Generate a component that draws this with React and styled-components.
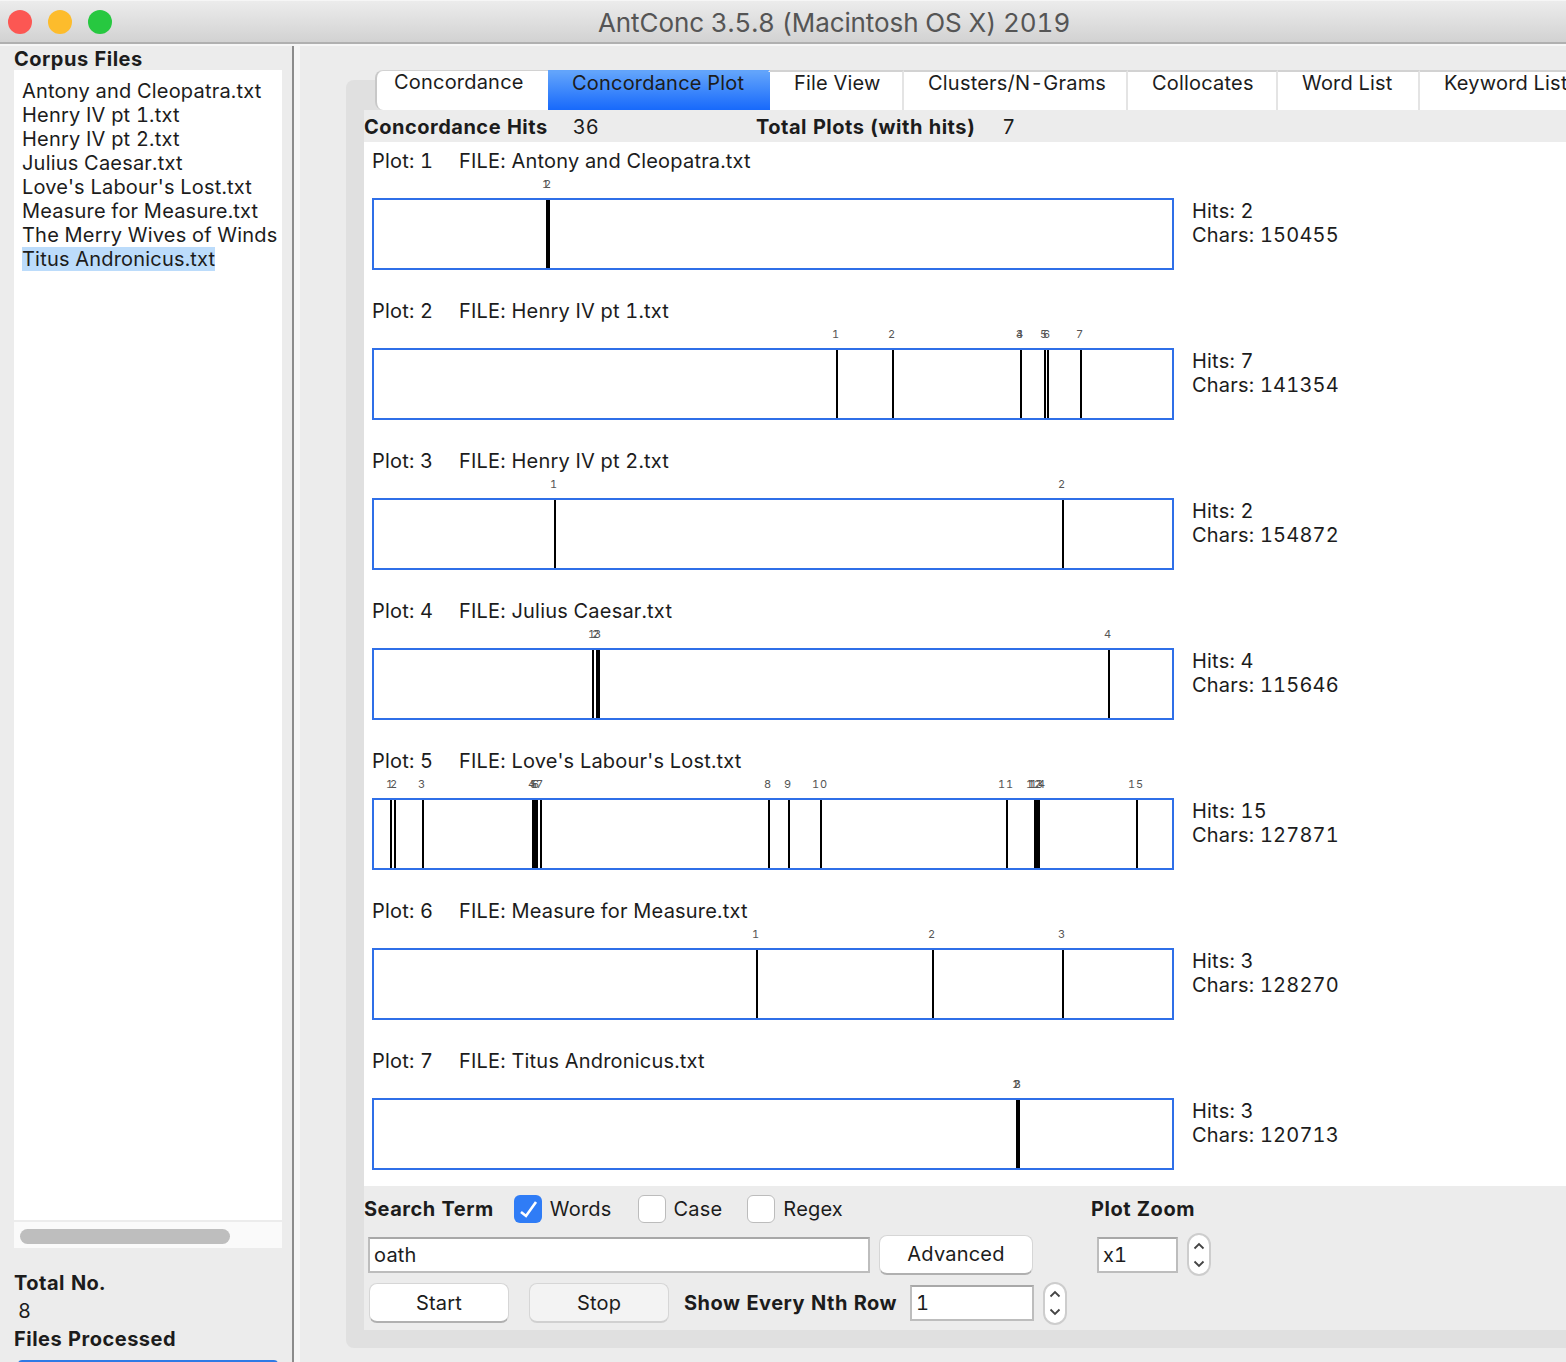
import styled, { createGlobalStyle } from "styled-components";

const BOX_ORIGIN = 374;

const files = [
    "Antony and Cleopatra.txt",
    "Henry IV pt 1.txt",
    "Henry IV pt 2.txt",
    "Julius Caesar.txt",
    "Love's Labour's Lost.txt",
    "Measure for Measure.txt",
    "The Merry Wives of Winds",
    "Titus Andronicus.txt",
];

const plots = [
    { file: "Antony and Cleopatra.txt", chars: 150455, marks: [547, 549] },
    { file: "Henry IV pt 1.txt", chars: 141354, marks: [837, 893, 1021, 1021, 1045, 1048, 1081] },
    { file: "Henry IV pt 2.txt", chars: 154872, marks: [555, 1063] },
    { file: "Julius Caesar.txt", chars: 115646, marks: [593, 597, 599, 1109] },
    {
        file: "Love's Labour's Lost.txt",
        chars: 127871,
        marks: [391, 395, 423, 533, 535, 537, 541, 769, 789, 821, 1007, 1035, 1037, 1039, 1137],
    },
    { file: "Measure for Measure.txt", chars: 128270, marks: [757, 933, 1063] },
    { file: "Titus Andronicus.txt", chars: 120713, marks: [1017, 1018, 1019] },
];

const tabs = [
    { label: "Concordance", width: 173, pad: 17, first: true },
    { label: "Concordance Plot", width: 222, pad: 24, active: true },
    { label: "File View", width: 134, pad: 24 },
    { label: "Clusters/N-Grams", width: 224, pad: 24 },
    { label: "Collocates", width: 150, pad: 24 },
    { label: "Word List", width: 142, pad: 24 },
    { label: "Keyword List", width: 180, pad: 24 },
];

const Stepper = () => (
    <StepperBox>
        <svg width="12" height="34" viewBox="0 0 12 34" fill="none" stroke="#444" strokeWidth="1.8">
            <path d="M1.5 10.5 L6 6 L10.5 10.5" />
            <path d="M1.5 23.5 L6 28 L10.5 23.5" />
        </svg>
    </StepperBox>
);

const App = () => {
    return (
        <Window>
            <GlobalStyle />
            <TitleBar>
                <Light $color="#fc5753" />
                <Light $color="#fdbc2c" />
                <Light $color="#27c840" />
                <Title>AntConc 3.5.8 (Macintosh OS X) 2019</Title>
            </TitleBar>

            <Body>
                <Sidebar>
                    <Heading>Corpus Files</Heading>
                    <FileList>
                        {files.map((name, i) => (
                            <FileRow key={name}>
                                <FileName $selected={i === files.length - 1}>{name}</FileName>
                            </FileRow>
                        ))}
                    </FileList>
                    <ScrollTrack><ScrollThumb /></ScrollTrack>
                    <TotalBlock>
                        <Heading>Total No.</Heading>
                        <TotalValue>8</TotalValue>
                        <Heading>Files Processed</Heading>
                    </TotalBlock>
                    <Progress />
                </Sidebar>

                <Splitter />

                <Main>
                    <TabPane>
                        <TabStrip>
                            {tabs.map((t) => (
                                <Tab key={t.label} $width={t.width} $pad={t.pad} $active={t.active} $first={t.first}>
                                    {t.label}
                                </Tab>
                            ))}
                        </TabStrip>

                        <Content>
                            <StatsRow>
                                <Heading>Concordance Hits</Heading>
                                <StatValue $left={25}>36</StatValue>
                                <Heading $left={157}>Total Plots (with hits)</Heading>
                                <StatValue $left={27}>7</StatValue>
                            </StatsRow>

                            <PlotArea>
                                {plots.map((plot, i) => (
                                    <PlotRow key={plot.file}>
                                        <PlotTitle>
                                            <PlotNo>Plot: {i + 1}</PlotNo>
                                            <span>FILE: {plot.file}</span>
                                        </PlotTitle>
                                        <PlotBody>
                                            <PlotBox>
                                                {plot.marks.map((x, n) => (
                                                    <span key={n}>
                                                        <TickLabel style={{ left: x - 1 - BOX_ORIGIN }}>{n + 1}</TickLabel>
                                                        <Mark style={{ left: x - 1 - BOX_ORIGIN }} />
                                                    </span>
                                                ))}
                                            </PlotBox>
                                            <PlotInfo>
                                                <div>Hits: {plot.marks.length}</div>
                                                <div>Chars: {plot.chars}</div>
                                            </PlotInfo>
                                        </PlotBody>
                                    </PlotRow>
                                ))}
                            </PlotArea>

                            <Controls>
                                <ControlRow $height={46}>
                                    <Heading>Search Term</Heading>
                                    <Checkbox $checked $left={20}>
                                        <svg width="28" height="28" viewBox="0 0 28 28" fill="none" stroke="#fff" strokeWidth="2.6">
                                            <path d="M7 17 L12 21 L22 7" />
                                        </svg>
                                    </Checkbox>
                                    <CheckLabel>Words</CheckLabel>
                                    <Checkbox $left={26} />
                                    <CheckLabel>Case</CheckLabel>
                                    <Checkbox $left={25} />
                                    <CheckLabel>Regex</CheckLabel>
                                    <Heading $left={248}>Plot Zoom</Heading>
                                </ControlRow>

                                <ControlRow $height={45}>
                                    <Field $width={502} $left={4}>oath</Field>
                                    <MacButton $width={154} $height={40} $left={9}>Advanced</MacButton>
                                    <Field $width={81} $left={64}>x1</Field>
                                    <Stepper />
                                </ControlRow>

                                <ControlRow $height={52}>
                                    <MacButton $width={140} $height={40} $left={5}>Start</MacButton>
                                    <MacButton $width={140} $height={40} $left={20} $disabled>Stop</MacButton>
                                    <Heading $left={15}>Show Every Nth Row</Heading>
                                    <Field $width={124} $left={13}>1</Field>
                                    <Stepper />
                                </ControlRow>
                            </Controls>
                        </Content>
                    </TabPane>
                </Main>
            </Body>
        </Window>
    );
};

const GlobalStyle = createGlobalStyle`
    html, body {
        margin: 0;
        padding: 0;
        background: #ececec;
    }
    * {
        box-sizing: border-box;
    }
`;

const Window = styled.div`
    width: 1566px;
    height: 1362px;
    overflow: hidden;
    display: flex;
    flex-direction: column;
    background-color: #ececec;
    color: #1c1c1c;
    font-family: Inter, "Liberation Sans", sans-serif;
    font-size: 20px;
    font-variant-numeric: tabular-nums;
    letter-spacing: 0.2px;
    line-height: 24px;
`;

const TitleBar = styled.div`
    display: flex;
    align-items: center;
    flex: none;
    height: 44px;
    padding: 0 0 0 8px;
    gap: 16px;
    background: linear-gradient(#ececec, #d2d2d2);
    border-top: 1px solid #f6f6f6;
    border-bottom: 2px solid #b0b0b0;
`;

const Light = styled.div`
    width: 24px;
    height: 24px;
    border-radius: 50%;
    background-color: ${(p) => p.$color};
`;

const Title = styled.div`
    margin-left: 470px;
    padding-top: 2px;
    font-size: 26px;
    letter-spacing: -0.1px;
    color: #555;
`;

const Body = styled.div`
    display: flex;
    flex: 1;
    min-height: 0;
    padding-top: 2px;
    background-color: #f6f6f6;
`;

const Sidebar = styled.div`
    position: relative;
    flex: none;
    width: 292px;
    padding: 1px 10px 0 14px;
    background-color: #ececec;
`;

const Heading = styled.div`
    flex: none;
    margin-left: ${(p) => p.$left || 0}px;
    font-weight: 700;
    font-size: 20px;
    letter-spacing: 0.5px;
    white-space: nowrap;
`;

const FileList = styled.div`
    height: 1150px;
    padding: 9px 0 0 8px;
    background-color: #fff;
    margin-top: -1px;
`;

const FileRow = styled.div`
    height: 24px;
    white-space: nowrap;
`;

const FileName = styled.span`
    display: inline-block;
    height: 24px;
    background-color: ${(p) => (p.$selected ? "#bcdcfb" : "transparent")};
`;

const ScrollTrack = styled.div`
    height: 26px;
    margin-top: 2px;
    padding: 7px 6px;
    background-color: #fafafa;
`;

const ScrollThumb = styled.div`
    width: 210px;
    height: 15px;
    border-radius: 8px;
    background-color: #bebebe;
`;

const TotalBlock = styled.div`
    margin-top: 23px;
`;

const TotalValue = styled.div`
    height: 32px;
    padding: 4px 0 0 4px;
`;

const Progress = styled.div`
    position: absolute;
    left: 18px;
    bottom: -8px;
    width: 260px;
    height: 10px;
    border-radius: 4px;
    background-color: #2e7ae6;
`;

const Splitter = styled.div`
    flex: none;
    width: 2px;
    background-color: #8c8c8c;
`;

const Main = styled.div`
    flex: 1;
    min-width: 0;
    padding: 34px 0 0 46px;
    margin-left: 6px;
    background-color: #ececec;
    overflow: hidden;
`;

const TabPane = styled.div`
    display: flow-root;
    width: 1300px;
    height: 1268px;
    padding: 0 0 18px 18px;
    border-radius: 8px;
    background-color: #e0e0e0;
`;

const TabStrip = styled.div`
    display: flex;
    height: 40px;
    margin: -10px 0 0 11px;
`;

const Tab = styled.div`
    flex: none;
    width: ${(p) => p.$width}px;
    padding: 0 0 0 ${(p) => p.$pad}px;
    white-space: nowrap;
    line-height: 22px;
    background: ${(p) => (p.$active ? "linear-gradient(#62a4fb, #1769fb)" : "#fff")};
    border-top: 2px solid ${(p) => (p.$active ? "#62a4fb" : "#d2d2d2")};
    border-right: 2px solid ${(p) => (p.$active ? "transparent" : "#e4e4e4")};
    ${(p) => p.$first && "border-left: 2px solid #c8c8c8; border-radius: 8px 0 0 8px; border-right: none; border-top: 1px solid #d2d2d2;"}
`;

const Content = styled.div`
    height: 1220px;
    background-color: #ececec;
`;

const StatsRow = styled.div`
    display: flex;
    align-items: center;
    height: 32px;
    padding-top: 2px;
`;

const StatValue = styled.div`
    margin-left: ${(p) => p.$left}px;
`;

const PlotArea = styled.div`
    height: 1044px;
    background-color: #fff;
`;

const PlotRow = styled.div`
    height: 150px;
    padding: 7px 0 0 8px;
`;

const PlotTitle = styled.div`
    display: flex;
    height: 24px;
    white-space: nowrap;
`;

const PlotNo = styled.span`
    width: 87px;
`;

const PlotBody = styled.div`
    display: flex;
    margin-top: 25px;
    gap: 18px;
`;

const PlotBox = styled.div`
    position: relative;
    flex: none;
    width: 802px;
    height: 72px;
    border: 2px solid #2f6fe8;
`;

const Mark = styled.div`
    position: absolute;
    top: 0;
    width: 2px;
    height: 68px;
    background-color: #000;
`;

const TickLabel = styled.div`
    position: absolute;
    top: -23px;
    font-size: 11px;
    letter-spacing: 0.8px;
    line-height: 14px;
    color: #555;
    transform: translateX(-50%);
`;

const PlotInfo = styled.div`
    padding-top: 1px;
    white-space: nowrap;
`;

const Controls = styled.div`
    height: 144px;
`;

const ControlRow = styled.div`
    display: flex;
    align-items: center;
    height: ${(p) => p.$height}px;
`;

const Checkbox = styled.div`
    flex: none;
    display: flex;
    align-items: center;
    justify-content: center;
    width: 28px;
    height: 28px;
    margin-left: ${(p) => p.$left}px;
    border-radius: 6px;
    background-color: ${(p) => (p.$checked ? "#2f7cf6" : "#fff")};
    border: ${(p) => (p.$checked ? "none" : "1px solid #bcbcbc")};
`;

const CheckLabel = styled.div`
    margin-left: 8px;
`;

const Field = styled.div`
    flex: none;
    width: ${(p) => p.$width}px;
    height: 36px;
    margin-left: ${(p) => p.$left}px;
    padding: 4px 0 0 4px;
    background-color: #fff;
    border: 2px solid #bdbdbd;
    border-top-color: #a8a8a8;
`;

const MacButton = styled.div`
    flex: none;
    display: flex;
    align-items: center;
    justify-content: center;
    width: ${(p) => p.$width}px;
    height: ${(p) => p.$height}px;
    margin-left: ${(p) => p.$left}px;
    border-radius: 8px;
    background-color: ${(p) => (p.$disabled ? "#f3f3f3" : "#fff")};
    border: 1px solid #d6d6d6;
    border-bottom: 2px solid ${(p) => (p.$disabled ? "#d0d0d0" : "#b0b0b0")};
`;

const StepperBox = styled.div`
    flex: none;
    display: flex;
    align-items: center;
    justify-content: center;
    width: 24px;
    height: 43px;
    margin-left: 9px;
    border-radius: 12px;
    background-color: #fff;
    border: 2px solid #cdcdcd;
`;

export default App;
